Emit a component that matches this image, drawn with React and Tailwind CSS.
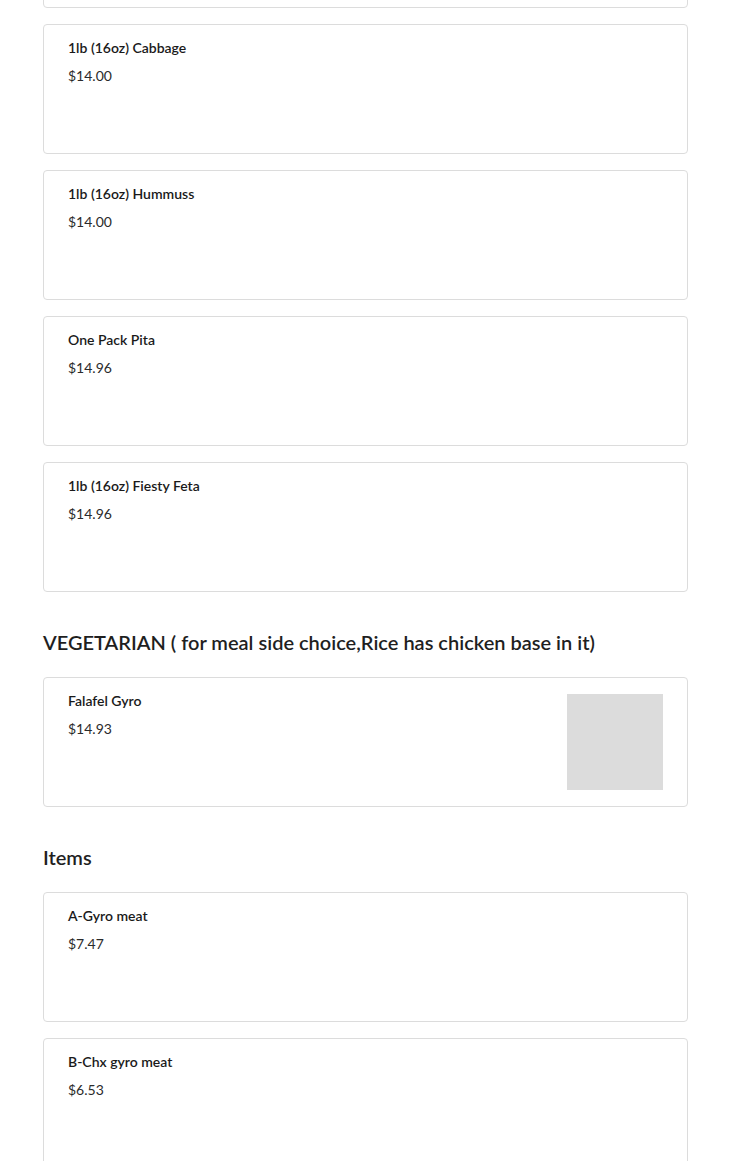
import React from "react";

const sections = [
  {
    title: null,
    items: [
      { name: "", price: "" },
      { name: "1lb (16oz) Cabbage", price: "$14.00" },
      { name: "1lb (16oz) Hummuss", price: "$14.00" },
      { name: "One Pack Pita", price: "$14.96" },
      { name: "1lb (16oz) Fiesty Feta", price: "$14.96" },
    ],
  },
  {
    title: "VEGETARIAN ( for meal side choice,Rice has chicken base in it)",
    items: [{ name: "Falafel Gyro", price: "$14.93", image: true }],
  },
  {
    title: "Items",
    items: [
      { name: "A-Gyro meat", price: "$7.47" },
      { name: "B-Chx gyro meat", price: "$6.53" },
    ],
  },
];

const ItemCard = ({ item }) => (
  <div className="flex h-[130px] justify-between rounded-[4px] border border-[#dcdcdc] bg-white px-6 pt-4">
    <div className="-mt-px flex flex-col">
      {item.name && (
        <p className="text-[14px] leading-[16px] font-semibold text-[#1a1a1a]">{item.name}</p>
      )}
      {item.price && (
        <p className="mt-3 text-[14px] leading-[16px] text-[#2b2b2b]">{item.price}</p>
      )}
    </div>
    {item.image && <div className="h-[96px] w-[96px] bg-[#dcdcdc]"></div>}
  </div>
);

export default function App() {
  return (
    <div
      className="min-h-screen bg-white overflow-hidden"
      style={{ fontFamily: "Lato, 'Open Sans', sans-serif" }}
    >
      <div className="ml-[43px] w-[645px] -mt-[122px]">
        {sections.map((section, si) => (
          <div key={si}>
            {section.title && (
              <h2 className="mt-[38px] mb-[23px] text-[20px] leading-[24px] font-semibold text-[#1f1f1f]">
                {section.title}
              </h2>
            )}
            <div className="flex flex-col gap-4">
              {section.items.map((item, i) => (
                <ItemCard key={i} item={item} />
              ))}
            </div>
          </div>
        ))}
      </div>
    </div>
  );
}
